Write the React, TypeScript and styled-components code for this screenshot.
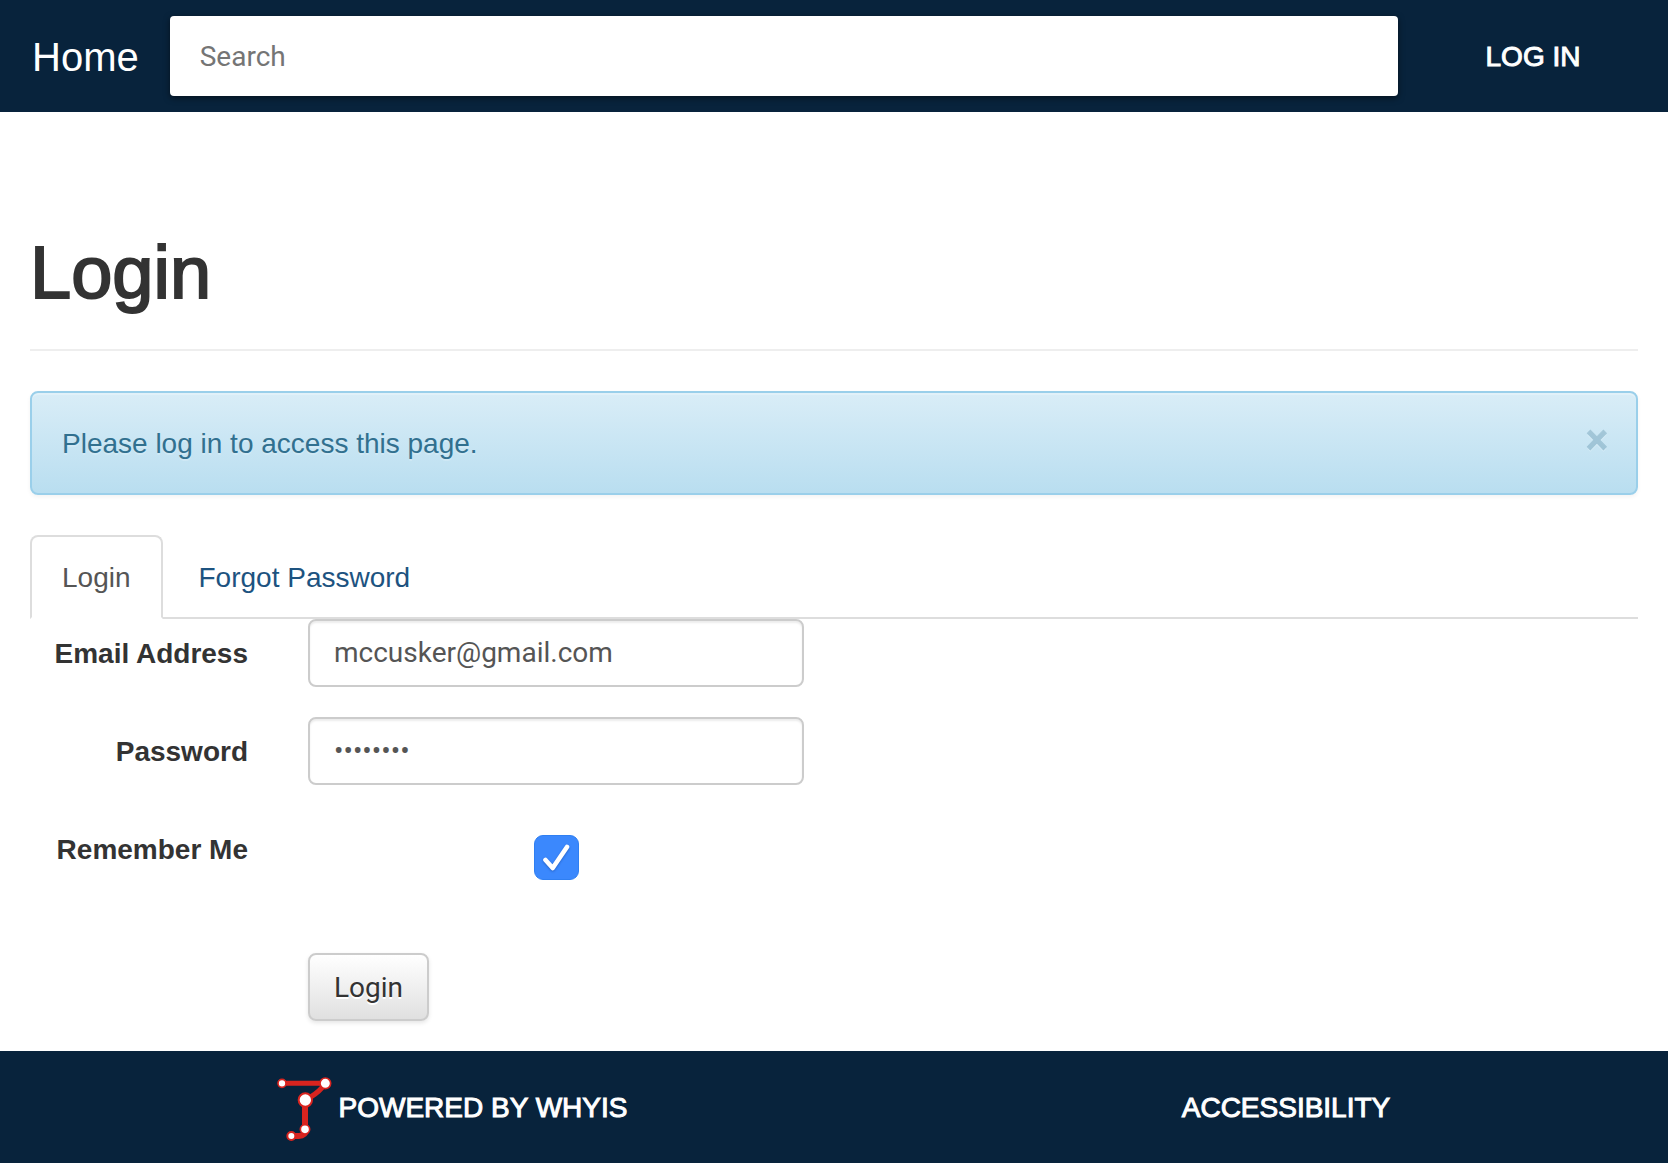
import { useState, type FormEvent } from "react";
import styled, { createGlobalStyle, ThemeProvider } from "styled-components";

const theme = {
  sans: '"Liberation Sans", Arial, sans-serif',
  control: 'Roboto, "Liberation Sans", sans-serif',
  navy: "#08233c",
  text: "#333333",
  gutter: "30px",
};

const GlobalStyle = createGlobalStyle`
  *, *::before, *::after { box-sizing: border-box; }
  body {
    margin: 0;
    background: #ffffff;
    color: ${theme.text};
    font-family: ${theme.sans};
    font-size: 28px;
    line-height: 40px;
  }
`;

const Page = styled.div`
  display: flex;
  flex-direction: column;
  min-height: 100vh;
`;

const Header = styled.header`
  display: flex;
  align-items: center;
  padding: 16px 0 16px 32px;
  background: ${({ theme }) => theme.navy};
`;

const Brand = styled.a`
  margin-right: 31px;
  padding-top: 2px;
  color: #ffffff;
  font-size: 40px;
  text-decoration: none;
`;

const SearchInput = styled.input`
  flex: 1;
  min-width: 0;
  height: 80px;
  padding: 0 30px;
  border: 0;
  border-radius: 4px;
  background: #ffffff;
  box-shadow: 0 2px 6px rgba(0, 0, 0, 0.5);
  color: #555555;
  font-family: ${({ theme }) => theme.control};
  font-size: 28px;
  &::placeholder {
    color: #757575;
  }
`;

const HeaderAction = styled.nav`
  display: flex;
  justify-content: center;
  width: 270px;
`;

const NavLink = styled.a`
  display: flex;
  align-items: center;
  gap: 7px;
  color: #ffffff;
  text-decoration: none;
  text-transform: uppercase;
  -webkit-text-stroke: 1px #ffffff;
`;

const LinkText = styled.span`
  padding-top: 2px;
`;

const Main = styled.main`
  flex: 1;
  padding: 121px ${({ theme }) => theme.gutter} 0;
`;

const Title = styled.h1`
  margin: 0 0 40px;
  padding-bottom: 36px;
  border-bottom: 2px solid #eeeeee;
  font-size: 74px;
  font-weight: 400;
  line-height: 80px;
  -webkit-text-stroke: 2px ${({ theme }) => theme.text};
`;

const Alert = styled.div`
  display: flex;
  justify-content: space-between;
  margin-bottom: 40px;
  padding: 31px 28px 29px 30px;
  border: 2px solid #9acfea;
  border-radius: 8px;
  background: linear-gradient(#d9edf7, #b9def0);
  box-shadow:
    inset 0 2px 0 rgba(255, 255, 255, 0.25),
    0 2px 4px rgba(0, 0, 0, 0.05);
  color: #31708f;
  text-shadow: 0 2px 0 rgba(255, 255, 255, 0.2);
`;

const CloseButton = styled.button`
  height: 32px;
  padding: 0;
  border: 0;
  background: none;
  color: #00486b;
  font-family: ${({ theme }) => theme.sans};
  font-size: 38px;
  font-weight: 700;
  line-height: 32px;
  text-shadow: 0 2px 0 #ffffff;
  -webkit-text-stroke: 1px #00486b;
  opacity: 0.2;
  cursor: pointer;
`;

const Tabs = styled.nav`
  display: flex;
  gap: 4px;
  border-bottom: 2px solid #dddddd;
`;

const Tab = styled.a<{ $active?: boolean }>`
  margin-bottom: -2px;
  padding: 21px 30px 19px;
  border: 2px solid ${({ $active }) => ($active ? "#dddddd" : "transparent")};
  border-bottom-color: ${({ $active }) => ($active ? "#ffffff" : "transparent")};
  border-radius: 8px 8px 0 0;
  background: ${({ $active }) => ($active ? "#ffffff" : "transparent")};
  color: ${({ $active }) => ($active ? "#555555" : "#1d5380")};
  text-decoration: none;
`;

const Form = styled.form`
  margin: 0 -30px;
`;

const FormRow = styled.div<{ $tall?: boolean }>`
  display: grid;
  grid-template-columns: 2fr 4fr 6fr;
  min-height: ${({ $tall }) => ($tall ? "108px" : "68px")};
  margin-bottom: 30px;
`;

const Label = styled.label`
  padding: 15px 30px 0;
  font-weight: 700;
  text-align: right;
  white-space: nowrap;
`;

const Field = styled.div`
  grid-column: 2;
  padding: 0 30px;
`;

const TextInput = styled.input`
  display: block;
  width: 100%;
  height: 68px;
  padding: 11px 24px 13px;
  border: 2px solid #cccccc;
  border-radius: 8px;
  background: #ffffff;
  box-shadow: inset 0 2px 2px rgba(0, 0, 0, 0.08);
  color: #555555;
  font-family: ${({ theme }) => theme.control};
  font-size: 28px;
`;

const CheckField = styled(Field)`
  display: grid;
  justify-content: center;
  align-content: start;
  padding-top: 20px;
`;

const Checkbox = styled.input`
  grid-area: 1 / 1;
  appearance: none;
  width: 45px;
  height: 45px;
  margin: 0;
  border: 1px solid #b5b5b5;
  border-radius: 9px;
  background: #ffffff;
  &:checked {
    border-color: #2f7ff2;
    background: #3b88fd;
  }
  & + svg {
    visibility: hidden;
  }
  &:checked + svg {
    visibility: visible;
  }
`;

const CheckMark = styled.svg`
  grid-area: 1 / 1;
  pointer-events: none;
  filter: drop-shadow(0 1px 1px rgba(0, 40, 120, 0.4));
`;

const SubmitButton = styled.button`
  display: block;
  height: 68px;
  padding: 0 24px;
  border: 2px solid #cccccc;
  border-radius: 8px;
  background: linear-gradient(#ffffff, #e0e0e0);
  box-shadow:
    inset 0 2px 0 rgba(255, 255, 255, 0.15),
    0 2px 4px rgba(0, 0, 0, 0.1);
  color: ${({ theme }) => theme.text};
  font-family: ${({ theme }) => theme.control};
  font-size: 28px;
  text-shadow: 0 2px 0 #ffffff;
  cursor: pointer;
`;

const Footer = styled.footer`
  display: grid;
  grid-template-columns: 1fr 1fr;
  min-height: 112px;
  background: ${({ theme }) => theme.navy};
`;

const FooterItem = styled.div`
  display: flex;
  align-items: center;
  justify-content: center;
  padding-left: 70px;
`;

const Logo = styled.svg`
  margin-top: 4px;
`;

function WhyisLogo() {
  return (
    <Logo width="55" height="64" viewBox="33 39 165 192" aria-hidden="true">
      <g fill="none" stroke="#d9241f" strokeWidth="15">
        <path d="M48 58H178L170 69Q150 92 118 108" />
        <path d="M117 108V196" strokeWidth="18" />
        <path d="M119 196Q120 215 98 216H76" strokeWidth="18" />
      </g>
      <g fill="#ffffff" stroke="#d9241f" strokeWidth="5">
        <circle cx="48" cy="58" r="12" />
        <circle cx="178" cy="58" r="16" />
        <circle cx="118" cy="108" r="20" strokeWidth="6" />
        <circle cx="117" cy="196" r="14" />
        <circle cx="76" cy="216" r="12" strokeWidth="6" />
      </g>
    </Logo>
  );
}

export default function App() {
  const [alertOpen, setAlertOpen] = useState(true);
  const submit = (event: FormEvent) => event.preventDefault();

  return (
    <ThemeProvider theme={theme}>
      <GlobalStyle />
      <Page>
        <Header>
          <Brand href="#home">Home</Brand>
          <SearchInput type="search" placeholder="Search" aria-label="Search" />
          <HeaderAction>
            <NavLink href="#login">
              <LinkText>Log in</LinkText>
            </NavLink>
          </HeaderAction>
        </Header>
        <Main>
          <Title>Login</Title>
          {alertOpen && (
            <Alert role="alert">
              <span>Please log in to access this page.</span>
              <CloseButton type="button" aria-label="Close" onClick={() => setAlertOpen(false)}>
                ×
              </CloseButton>
            </Alert>
          )}
          <Tabs>
            <Tab href="#login" $active>
              Login
            </Tab>
            <Tab href="#forgot">Forgot Password</Tab>
          </Tabs>
          <Form onSubmit={submit}>
            <FormRow>
              <Label htmlFor="email">Email Address</Label>
              <Field>
                <TextInput id="email" type="text" defaultValue="mccusker@gmail.com" />
              </Field>
            </FormRow>
            <FormRow>
              <Label htmlFor="password">Password</Label>
              <Field>
                <TextInput id="password" type="password" defaultValue="password" />
              </Field>
            </FormRow>
            <FormRow $tall>
              <Label htmlFor="remember">Remember Me</Label>
              <CheckField>
                <Checkbox id="remember" type="checkbox" defaultChecked />
                <CheckMark width="45" height="45" viewBox="0 0 45 45" aria-hidden="true">
                  <path
                    d="M11.5 25L18.7 33L33 12"
                    fill="none"
                    stroke="#ffffff"
                    strokeWidth="4.6"
                    strokeLinecap="round"
                    strokeLinejoin="round"
                  />
                </CheckMark>
              </CheckField>
            </FormRow>
            <FormRow>
              <Field>
                <SubmitButton type="submit">Login</SubmitButton>
              </Field>
            </FormRow>
          </Form>
        </Main>
        <Footer>
          <FooterItem>
            <NavLink href="#whyis">
              <WhyisLogo />
              <LinkText>Powered by Whyis</LinkText>
            </NavLink>
          </FooterItem>
          <FooterItem>
            <NavLink href="#accessibility">
              <LinkText>Accessibility</LinkText>
            </NavLink>
          </FooterItem>
        </Footer>
      </Page>
    </ThemeProvider>
  );
}
